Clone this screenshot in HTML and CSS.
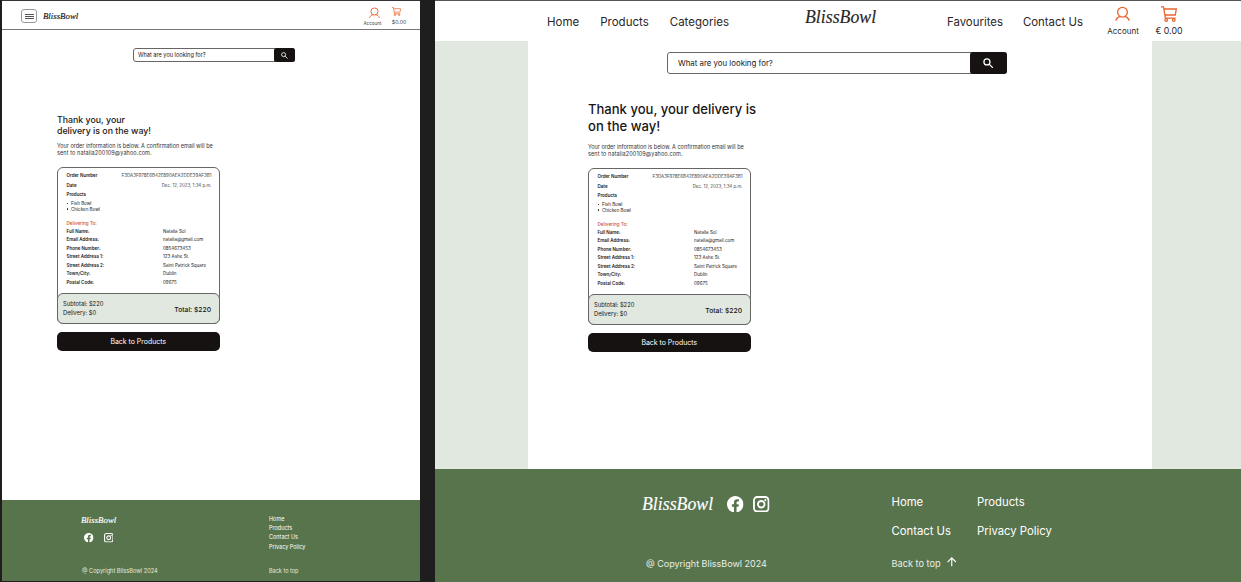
FILE: index.html
```
<!DOCTYPE html>
<html lang="en">
<head>
<meta charset="utf-8">
<title>BlissBowl – Order confirmation</title>
<link rel="stylesheet" href="styles.css">
</head>
<body>
<svg class="sprite" width="0" height="0">
  <symbol id="user" viewBox="0 0 16 16"><g fill="none" stroke="currentColor" stroke-width="1.400"><circle cx="8" cy="6.600" r="5.200"/><path d="M1 15.200c.9-2.300 2.500-3.800 5-4.100M15 15.200c-.9-2.300-2.500-3.800-5-4.100" stroke-linecap="round"/></g></symbol>
  <symbol id="cart" viewBox="0 0 16 16"><g fill="none" stroke="currentColor" stroke-width="1.300"><path d="M0 .8h2.500l1.900 11.300h10.200M3 3h12.300l-1 6H4"/><circle cx="5.200" cy="14" r="1.300"/><circle cx="12.800" cy="14" r="1.300"/></g></symbol>
  <symbol id="search" viewBox="0 0 16 16"><g fill="none" stroke="currentColor" stroke-width="1.900"><circle cx="6" cy="6" r="4.600"/><path d="M9.400 9.400l5.600 5.600"/></g></symbol>
  <symbol id="facebook" viewBox="0 0 24 24"><path fill="currentColor" d="M24 12.070C24 5.400 18.630 0 12 0S0 5.400 0 12.070C0 18.100 4.390 23.100 10.130 24v-8.440H7.080v-3.490h3.050V9.410c0-3.020 1.790-4.690 4.530-4.690 1.310 0 2.680.24 2.680.24v2.970h-1.510c-1.490 0-1.960.93-1.960 1.890v2.250h3.330l-.53 3.490h-2.800V24C19.610 23.100 24 18.100 24 12.070z"/></symbol>
  <symbol id="instagram" viewBox="0 0 24 24"><g fill="none" stroke="currentColor" stroke-width="2.700"><rect x="1.400" y="1.400" width="21.200" height="21.200" rx="5"/><circle cx="12" cy="12" r="4.800"/></g><circle cx="18" cy="6" r="1.500" fill="currentColor"/></symbol>
  <symbol id="up" viewBox="0 0 16 16"><path fill="none" stroke="currentColor" stroke-width="1.900" d="M8 16V1.500M1 8.500l7-7 7 7"/></symbol>
</svg>
<div class="board">
  <section class="mobile">
    <header class="m-header">
      <button class="burger"><i></i><i></i><i></i></button>
      <span class="logo">BlissBowl</span>
      <div class="action account"><svg><use href="#user"/></svg><span>Account</span></div>
      <div class="action cart"><svg><use href="#cart"/></svg><span>$0.00</span></div>
    </header>
    <main class="m-main">
      <div class="search"><span>What are you looking for?</span><button><svg><use href="#search"/></svg></button></div>
      <div class="order">
        <h1>Thank you, your<br>delivery is on the way!</h1>
        <p class="intro">Your order information is below. A confirmation email will be<br><span class="mail">sent to natalia200109@yahoo.com.</span></p>
        <div class="card">
          <div class="details">
            <div class="row top"><b>Order Number</b><span class="hash">F3DA3F978E6B42E890AEA2DDE39AF3B1</span></div>
            <div class="row top"><b>Date</b><span class="date">Dec. 12, 2023, 1:34 p.m.</span></div>
            <div class="row top"><b>Products</b></div>
            <ul><li>Fish Bowl</li><li>Chicken Bowl</li></ul>
            <h2>Delivering To:</h2>
            <div class="row"><b>Full Name:</b><span>Natalia Sol</span></div>
            <div class="row"><b>Email Address:</b><span>natalia@gmail.com</span></div>
            <div class="row"><b>Phone Number:</b><span>0854673453</span></div>
            <div class="row"><b>Street Address 1:</b><span>123 Ashe St.</span></div>
            <div class="row"><b>Street Address 2:</b><span>Saint Patrick Square</span></div>
            <div class="row"><b>Town/City:</b><span>Dublin</span></div>
            <div class="row"><b>Postal Code:</b><span>09675</span></div>
          </div>
          <div class="summary"><div>Subtotal: $220<br>Delivery: $0</div><strong>Total: $220</strong></div>
        </div>
        <button class="back">Back to Products</button>
      </div>
    </main>
    <footer class="m-footer">
      <div class="brand">
        <span class="logo">BlissBowl</span>
        <div class="social"><svg><use href="#facebook"/></svg><svg><use href="#instagram"/></svg></div>
        <span class="copy">@ Copyright BlissBowl 2024</span>
      </div>
      <div class="links"><a>Home</a><a>Products</a><a>Contact Us</a><a>Privacy Policy</a><a class="top-link">Back to top</a></div>
    </footer>
  </section>
  <section class="desktop">
    <header class="d-header">
      <nav class="left"><a>Home</a><a>Products</a><a>Categories</a></nav>
      <span class="logo">BlissBowl</span>
      <nav class="right"><a>Favourites</a><a>Contact Us</a></nav>
      <div class="action account"><svg><use href="#user"/></svg><span>Account</span></div>
      <div class="action cart"><svg><use href="#cart"/></svg><span>€ 0.00</span></div>
    </header>
    <div class="d-body">
      <main class="d-main">
        <div class="search"><span>What are you looking for?</span><button><svg><use href="#search"/></svg></button></div>
        <div class="order">
          <h1>Thank you, your delivery is<br>on the way!</h1>
          <p class="intro">Your order information is below. A confirmation email will be<br><span class="mail">sent to natalia200109@yahoo.com.</span></p>
          <div class="card">
            <div class="details">
              <div class="row top"><b>Order Number</b><span class="hash">F3DA3F978E6B42E890AEA2DDE39AF3B1</span></div>
              <div class="row top"><b>Date</b><span class="date">Dec. 12, 2023, 1:34 p.m.</span></div>
              <div class="row top"><b>Products</b></div>
              <ul><li>Fish Bowl</li><li>Chicken Bowl</li></ul>
              <h2>Delivering To:</h2>
              <div class="row"><b>Full Name:</b><span>Natalia Sol</span></div>
              <div class="row"><b>Email Address:</b><span>natalia@gmail.com</span></div>
              <div class="row"><b>Phone Number:</b><span>0854673453</span></div>
              <div class="row"><b>Street Address 1:</b><span>123 Ashe St.</span></div>
              <div class="row"><b>Street Address 2:</b><span>Saint Patrick Square</span></div>
              <div class="row"><b>Town/City:</b><span>Dublin</span></div>
              <div class="row"><b>Postal Code:</b><span>09675</span></div>
            </div>
            <div class="summary"><div>Subtotal: $220<br>Delivery: $0</div><strong>Total: $220</strong></div>
          </div>
          <button class="back">Back to Products</button>
        </div>
      </main>
    </div>
    <footer class="d-footer">
      <div class="brand">
        <div class="brand-row"><span class="logo">BlissBowl</span><svg><use href="#facebook"/></svg><svg><use href="#instagram"/></svg></div>
        <span class="copy">@ Copyright BlissBowl 2024</span>
      </div>
      <div class="links"><a>Home</a><a>Products</a><a>Contact Us</a><a>Privacy Policy</a><a class="top-link">Back to top <svg><use href="#up"/></svg></a></div>
    </footer>
  </section>
</div>
</body>
</html>
```
FILE: styles.css
```
* { box-sizing: border-box; }
body { margin: 0; width: 1241px; height: 582px; overflow: hidden; background: #1e1e1e; color: #1a1616; font-family: Inter, "Open Sans", sans-serif; }
.sprite { display: block; height: 0; }
svg { display: block; flex: none; }
button { border: 0; padding: 0; font-family: inherit; }
h1, h2, p, ul { margin: 0; padding: 0; }
.board { display: flex; gap: 15px; height: 582px; padding: 0 0 0 2px; }
.logo { font-family: "Liberation Serif", serif; font-style: italic; font-weight: 500; white-space: nowrap; -webkit-text-stroke: .15px currentColor; }
.action { display: flex; flex-direction: column; align-items: center; white-space: nowrap; }
.action svg { color: #ea6530; }

/* Mobile frame */
.mobile { display: flex; flex-direction: column; flex: none; width: 418px; height: 581px; border-top: 1px solid #333; background: #fff; }
.m-header { display: flex; flex: none; height: 29px; border-bottom: 1px solid #777; }
.burger { display: flex; flex-direction: column; justify-content: center; align-items: center; gap: 1px; flex: none; width: 16px; height: 14px; margin: 8px 0 0 19px; border: 1px solid #999; border-radius: 3px; background: #fff; }
.burger i { width: 9px; height: 1px; background: #555; }
.m-header .logo { width: 36px; margin: 10px 0 0 6px; font-size: 8.800px; line-height: 11px; }
.m-header .action { font-size: 4.600px; line-height: 6px; color: #444; }
.m-header .account { width: 20px; margin: 6px 0 0 283.500px; }
.m-header .account svg { width: 11px; height: 11px; margin: 0 0 2.500px 4px; }
.m-header .cart { width: 16px; margin: 6px 0 0 8.500px; font-size: 5.200px; }
.m-header .cart svg { width: 9px; height: 9px; margin: 0 6px 2.500px 0; }
.m-main { flex: 1; padding: 18px 0 0 55px; }

.search { display: flex; justify-content: space-between; align-items: center; border: 1px solid #666; }
.search button { display: flex; align-items: center; justify-content: center; align-self: stretch; background: #161212; color: #fff; }
.m-main .search { width: 162px; height: 14px; margin-left: 76px; padding-left: 4px; border-radius: 3px; font-size: 5.600px; }
.m-main .search button { width: 21px; margin: -1px; border-radius: 2.500px; }
.m-main .search svg { width: 7px; height: 7px; }

.order { width: 162.500px; }
.m-main .order { padding-top: 51.500px; }
h1 { font-weight: 500; white-space: nowrap; }
.m-main h1 { font-size: 8.800px; line-height: 11.500px; }
.intro { font-size: 5.500px; line-height: 7.500px; white-space: nowrap; color: #333; }
.intro .mail { letter-spacing: .1px; }
.m-main .intro { margin-top: 6px; }
.card { display: flex; flex-direction: column; justify-content: space-between; width: 162.500px; height: 157.500px; margin-top: 9px; border: 1px solid #666; border-radius: 6px; }
.details { padding: 3.500px 7px 0 8.500px; font-size: 4.500px; }
.row { display: flex; height: 8.450px; line-height: 8.450px; white-space: nowrap; }
.row b { width: 96.500px; font-weight: 600; }
.row.top { justify-content: space-between; height: 9.500px; line-height: 9.500px; }
.row.top b { width: auto; }
.row.top span { color: #444; }
.row .date { font-size: 4.400px; }
ul { padding: 1.500px 0 0 4.500px; list-style: none; line-height: 5.700px; }
li::before { content: ""; display: inline-block; width: 1.400px; height: 1.400px; margin: 0 2.700px 1px -4px; border-radius: 50%; background: #1a1616; }
h2 { margin-top: 6.500px; font-size: 4.600px; line-height: 9px; font-weight: 500; color: #cf4d2c; }
.summary { display: flex; justify-content: space-between; align-items: center; height: 31px; margin: 0 -1px -1px; padding: 0 7.500px 1px 5px; border: 1px solid #666; border-radius: 6px; background: #e0e8df; font-size: 5.800px; line-height: 9px; }
.summary strong { padding-top: 3px; font-size: 6.750px; font-weight: 500; }
.back { display: block; width: 162.500px; height: 18.500px; margin-top: 8px; border-radius: 5px; background: #161212; color: #fff; font-size: 6.950px; }

.m-footer { display: flex; flex: none; height: 81px; padding: 15px 0 0 79px; background: #58744d; color: #fff; font-size: 5.500px; }
.m-footer .brand { display: flex; flex-direction: column; width: 188px; }
.m-footer .logo { font-size: 8.800px; line-height: 10px; }
.m-footer .social { display: flex; gap: 10px; padding: 8px 0 0 3px; }
.m-footer .social svg { width: 9.500px; height: 9.500px; }
.m-footer .copy { margin: 24px 0 0 1px; font-size: 5.650px; line-height: 9px; color: #e3eadf; }
.m-footer .links { display: flex; flex-direction: column; line-height: 9.200px; }
.m-footer .top-link { margin-top: 15px; color: #e3eadf; }

/* Desktop frame */
.desktop { display: flex; flex-direction: column; flex: none; width: 806px; height: 582px; border-top: 1px solid #555; background: #fff; }
.d-header { display: flex; flex: none; height: 40px; padding-left: 112px; font-size: 11.500px; color: #2a2626; }
.d-header nav { display: flex; gap: 21px; line-height: 14px; padding-top: 14px; white-space: nowrap; }
.d-header .left { width: 258px; }
.d-header .logo { width: 142px; padding-top: 5px; font-size: 17.800px; line-height: 22px; }
.d-header .right { width: 160px; gap: 20px; font-size: 11.400px; }
.d-header .action { font-size: 8px; line-height: 10px; }
.d-header .account { width: 32px; padding-top: 5px; }
.d-header .account svg { width: 15px; height: 15px; margin: 0 2px 5px 0; }
.d-header .cart { width: 28px; margin-left: 16px; padding-top: 5px; font-size: 8.800px; }
.d-header .cart svg { width: 16px; height: 16px; margin: 0 1px 4px 0; }
.d-body { display: flex; flex: 1; padding: 0 89px 0 93px; background: #e0e8df; }
.d-main { flex: 1; padding: 11px 0 0 60px; background: #fff; }
.d-main .search { width: 340px; height: 22px; margin-left: 79px; padding-left: 10px; border-radius: 3px; font-size: 7.850px; }
.d-main .search button { width: 37px; margin: -1px; border-radius: 3px; }
.d-main .search svg { width: 10.500px; height: 10.500px; }
.d-main .order { padding-top: 26.500px; }
.d-main h1 { font-size: 13.050px; line-height: 17px; }
.d-main .intro { margin-top: 9px; }
.d-main .card { margin-top: 9px; }

.d-footer { display: flex; flex: none; height: 113px; padding: 24px 0 0 207px; background: #58744d; color: #fff; }
.d-footer .brand { width: 249.500px; }
.d-footer .brand-row { display: flex; align-items: center; height: 22px; }
.d-footer .logo { width: 85px; font-size: 17.800px; }
.d-footer .brand-row svg { width: 16.500px; height: 16.500px; margin-right: 9.500px; }
.d-footer .copy { display: block; margin: 42px 0 0 4px; font-size: 9px; line-height: 14px; color: #e8eee5; }
.d-footer .links { display: grid; grid-template-columns: 85.500px 85px; grid-template-rows: 28.500px 28.500px 35px; height: 92px; font-size: 11.300px; line-height: 18px; white-space: nowrap; }
.d-footer .top-link { display: flex; gap: 6px; padding-top: 4.500px; font-size: 9.200px; color: #e8eee5; }
.d-footer .top-link svg { width: 9.500px; height: 9.500px; margin-top: 2.500px; color: #fff; }
```
